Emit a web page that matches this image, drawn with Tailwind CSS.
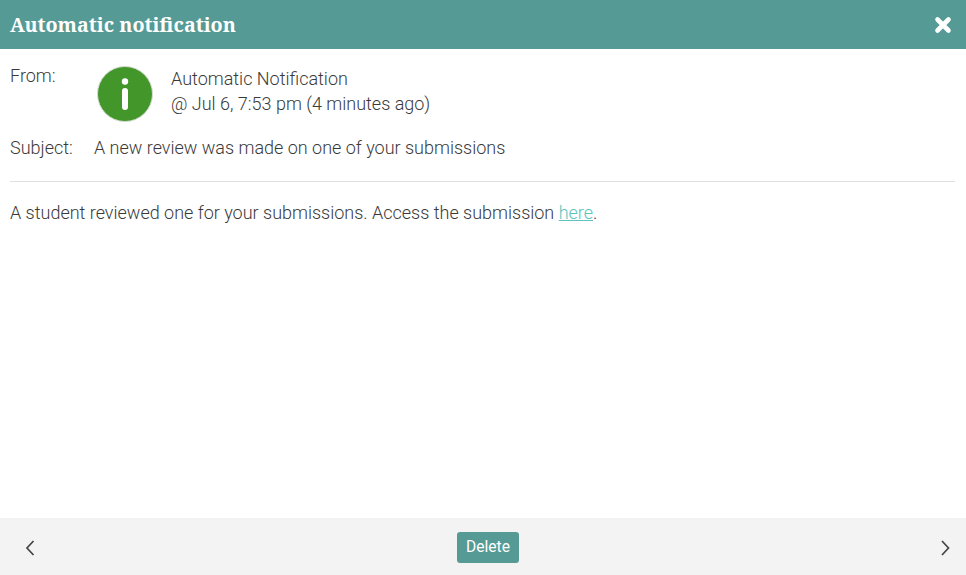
<!DOCTYPE html>
<html lang="en">
<head>
    <meta charset="UTF-8">
    <title>Automatic notification</title>
    <script src="https://cdn.jsdelivr.net/npm/@tailwindcss/browser@4"></script>
</head>
<body class="bg-white font-['Roboto',sans-serif] font-light text-[#3a3a3a] overflow-hidden">
    <div class="flex flex-col h-[575px] w-[966px]">
        <!-- Header -->
        <div class="flex items-center justify-between h-[49px] bg-[#559a94] pl-[10px] pr-[14px] text-white">
            <h1 class="font-['Noto_Serif','DejaVu_Serif',serif] font-bold text-[19.7px]">Automatic notification</h1>
            <svg class="w-[18px] h-[18px]" viewBox="0 0 18 18"><path d="M3.5 3.5 L14.5 14.5 M14.5 3.5 L3.5 14.5" stroke="#fff" stroke-width="4.6" stroke-linecap="round"/></svg>
        </div>

        <!-- Message -->
        <div class="flex-1 pl-[10px] pr-[11px] text-[17.99px] leading-[26px]">
            <div class="flex pt-[14px]">
                <div class="w-[84px]">From:</div>
                <div class="w-[56px] h-[56px] ml-[3px] mt-[3px] rounded-full bg-[#43962a] border border-[#d5dcd2] flex items-center justify-center">
                    <svg class="w-[10px] h-[34px]" viewBox="0 0 10 34"><circle cx="5" cy="4.5" r="3.2" fill="#fff"/><rect x="2" y="11" width="6" height="22" rx="3" fill="#fff"/></svg>
                </div>
                <div class="ml-[18px] pt-[3px]">
                    <div>Automatic Notification</div>
                    <div class="-mt-[1px]">@ Jul 6, 7:53 pm (4 minutes ago)</div>
                </div>
            </div>
            <div class="flex mt-[13px]">
                <div class="w-[84px]">Subject:</div>
                <div>A new review was made on one of your submissions</div>
            </div>
            <hr class="border-[#e0e0e0] mt-[20px] mb-[18px]">
            <p>A student reviewed one for your submissions. Access the submission <a href="#" class="text-[#5cc4bc] underline">here</a>.</p>
        </div>

        <!-- Footer -->
        <div class="flex items-center justify-between h-[57px] bg-[#f3f3f3] pl-[25px] pr-[16px] pt-[2px]">
            <svg class="w-[10px] h-[16px]" viewBox="0 0 10 16"><path d="M8.5 1 L2 8 L8.5 15" fill="none" stroke="#444" stroke-width="1.7"/></svg>
            <button class="bg-[#559a94] text-white text-[15.6px] font-normal rounded-[3px] h-[31px] w-[62px] ml-[1px] pt-[1px]">Delete</button>
            <svg class="w-[10px] h-[16px]" viewBox="0 0 10 16"><path d="M2 1 L8.5 8 L2 15" fill="none" stroke="#444" stroke-width="1.7"/></svg>
        </div>
    </div>
</body>
</html>
